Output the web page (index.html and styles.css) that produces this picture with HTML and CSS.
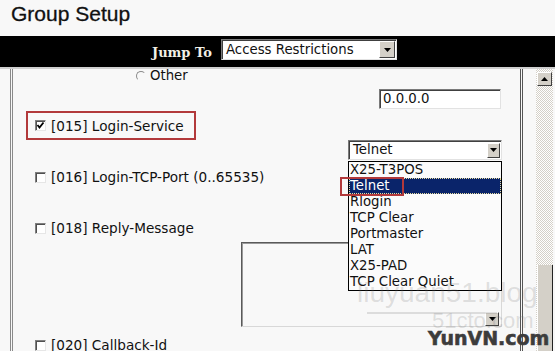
FILE: index.html
```html
<!DOCTYPE html>
<html lang="en">
<head>
    <meta charset="UTF-8">
    <title>Group Setup</title>
    <link rel="stylesheet" href="styles.css">
</head>
<body>
    <div class="title">Group Setup</div>

    <div class="jumpbar">
        <span class="jump-label">Jump To</span>
        <div class="combo combo-jump">
            <span class="combo-value">Access Restrictions</span>
            <span class="combo-btn"><svg width="7" height="4" viewBox="0 0 7 4"><polygon points="0,0 7,0 3.5,4" fill="#000"/></svg></span>
        </div>
    </div>
    <div class="separator"></div>

    <div class="main">
        <div class="frame">
            <div class="row row-other">
                <span class="radio"></span>Other
            </div>

            <div class="row row-ip">
                <div class="field">0.0.0.0</div>
            </div>

            <!-- marked attribute -->
            <div class="row row-marked">
                <label class="attr attr-marked">
                    <span class="check"><svg width="9" height="9" viewBox="0 0 9 9"><polyline points="1.5,4 3.5,6.5 7.5,1.5" fill="none" stroke="#000" stroke-width="1.8"/></svg></span>
                    [015] Login-Service
                </label>
            </div>

            <div class="row row-service">
                <div class="combo combo-service">
                    <span class="combo-value">Telnet</span>
                    <span class="combo-btn"><svg width="7" height="4" viewBox="0 0 7 4"><polygon points="0,0 7,0 3.5,4" fill="#000"/></svg></span>

                    <ul class="listbox">
                        <li>X25-T3POS</li>
                        <li class="selected">Telnet</li>
                        <li>Rlogin</li>
                        <li>TCP Clear</li>
                        <li>Portmaster</li>
                        <li>LAT</li>
                        <li>X25-PAD</li>
                        <li>TCP Clear Quiet</li>
                        <li class="item-mark"></li>
                    </ul>
                </div>
            </div>

            <div class="row row-port">
                <label class="attr"><span class="check"></span>[016] Login-TCP-Port (0..65535)</label>
            </div>

            <div class="row row-reply">
                <label class="attr"><span class="check"></span>[018] Reply-Message</label>
            </div>

            <div class="row row-textarea">
                <div class="textbox">
                    <span class="scroll-btn"><svg width="7" height="4" viewBox="0 0 7 4"><polygon points="0,0 7,0 3.5,4" fill="#000"/></svg></span>
                </div>
            </div>

            <div class="row row-callback">
                <label class="attr"><span class="check"></span>[020] Callback-Id</label>
            </div>
        </div>

        <div class="gutter"></div>

        <div class="scrollbar">
            <span class="sb-up"><svg width="7" height="4" viewBox="0 0 7 4"><polygon points="0,4 7,4 3.5,0" fill="#000"/></svg></span>
            <span class="sb-thumb"></span>
        </div>

        <!-- watermark over the screenshot -->
        <div class="watermark">
            <span class="wm-blog">liuyuan51.blog</span>
            <span class="wm-line"></span>
            <span class="wm-cto">51cto.com</span>
            <span class="wm-site">YunVN.com</span>
        </div>
    </div>
</body>
</html>
```

FILE: styles.css
```css
body {
    margin: 0;
    height: 351px;
    overflow: hidden;
    background: #f8f8f8;
    font-family: "DejaVu Sans", Verdana, sans-serif;
    font-size: 13.3px;
    color: #111;
}
.title {
    height: 36px;
    padding-left: 11px;
    font-family: "Liberation Sans", Arial, sans-serif;
    font-size: 21px;
    line-height: 28px;
    color: #111;
    -webkit-text-stroke: 0.3px #111;
}
.jumpbar {
    height: 31px;
    box-sizing: border-box;
    padding: 3px 0 0 152px;
    background: #000;
    display: flex;
    align-items: flex-start;
}
.jump-label {
    width: 61px;
    margin: 6px 8px 0 0;
    font-family: "DejaVu Serif", "Liberation Serif", serif;
    font-weight: bold;
    font-size: 13px;
    line-height: 16px;
    color: #f2f0e6;
    white-space: nowrap;
}
.separator {
    height: 2px;
    background: #cfcfcf;
}

/* old windows style controls */
.combo {
    box-sizing: border-box;
    display: flex;
    align-items: center;
    justify-content: space-between;
    padding-left: 2px;
    background: #fff;
    border: 1px solid;
    border-color: #7a7a7a #e2e2e2 #e2e2e2 #7a7a7a;
    box-shadow: inset 1px 1px #404040;
}
.combo-jump {
    width: 176px;
    height: 21px;
    line-height: 17px;
}
.combo-service {
    position: relative;
    width: 154px;
    height: 20px;
    line-height: 16px;
}
.combo-value {
    padding-left: 2px;
    white-space: nowrap;
}
.combo-btn, .scroll-btn, .sb-up {
    flex: none;
    box-sizing: border-box;
    display: flex;
    align-items: center;
    justify-content: center;
    background: #d4d0c8;
    border: 1px solid;
    border-color: #fff #404040 #404040 #fff;
}
.combo-jump .combo-btn {
    width: 16px;
    height: 17px;
    margin-right: 1px;
}
.combo-service .combo-btn {
    width: 13px;
    height: 15px;
    margin-right: 1px;
}
.listbox {
    position: absolute;
    top: 20px;
    left: -1px;
    z-index: 2;
    width: 154px;
    box-sizing: border-box;
    margin: 0;
    padding: 0;
    list-style: none;
    background: #fbfbfb;
    border: 1px solid #000;
}
.listbox li {
    height: 16px;
    line-height: 16px;
    padding-left: 1px;
    white-space: nowrap;
}
.listbox .selected {
    background: #0a246a;
    color: #fff;
    outline: 1px dotted #e6dca0;
    outline-offset: -1px;
}
.listbox .item-mark {
    position: absolute;
    top: 15px;
    left: -9px;
    width: 64px;
    height: 19px;
    box-sizing: border-box;
    padding: 0;
    border: 2px solid #b2393b;
}

.main {
    position: relative;
    display: flex;
    height: 282px;
}
.frame {
    flex: none;
    width: 507px;
    margin-left: 10px;
    border-left: 3px double #8a8a8a;
    border-right: 3px double #555;
}
.gutter {
    flex: none;
    width: 13px;
}
.scrollbar {
    flex: none;
    width: 17px;
    display: flex;
    flex-direction: column;
    background: repeating-conic-gradient(#d4d0c8 0 25%, #fff 0 50%) 0 0 / 2px 2px;
}
.sb-up {
    width: 15px;
    height: 14px;
    margin: 3px 0 0 1px;
}
.sb-thumb {
    margin: auto 0 0 1px;
    width: 16px;
    height: 86px;
    box-sizing: border-box;
    background: #d4d0c8;
    border-left: 1px solid #fff;
    border-right: 1px solid #222;
}

.row {
    display: flex;
}
.row-other {
    height: 16px;
    margin-top: -1px;
    padding-left: 123px;
    align-items: center;
    gap: 4px;
    line-height: 16px;
}
.radio {
    width: 10px;
    height: 10px;
    box-sizing: border-box;
    border-radius: 50%;
    border: 1px solid;
    border-color: #8a8a8a transparent transparent #8a8a8a;
}
.row-ip {
    margin-top: 5px;
    padding-left: 366px;
}
.field {
    width: 122px;
    height: 20px;
    box-sizing: border-box;
    padding-left: 3px;
    line-height: 17px;
    background: #fff;
    border: 1px solid;
    border-color: #7a7a7a #e2e2e2 #e2e2e2 #7a7a7a;
    box-shadow: inset 1px 1px #404040;
}
.row-marked {
    margin-top: 2px;
    padding-left: 13px;
}
.row-service {
    padding-left: 335px;
}
.row-port {
    margin-top: 9px;
    padding-left: 22px;
}
.row-reply {
    margin-top: 35px;
    padding-left: 22px;
}
.row-textarea {
    margin-top: 6px;
    padding-left: 228px;
}
.row-callback {
    margin-top: 10px;
    padding-left: 22px;
}
.attr {
    display: flex;
    align-items: center;
    gap: 5px;
    height: 16px;
    line-height: 16px;
    font-size: 13.6px;
    white-space: nowrap;
}
.attr-marked {
    width: 170px;
    height: 29px;
    box-sizing: border-box;
    padding-left: 7px;
    border: 2px solid #b2393b;
}
.check {
    flex: none;
    width: 11px;
    height: 11px;
    box-sizing: border-box;
    display: flex;
    align-items: center;
    justify-content: center;
    background: #fff;
    border: 1px solid;
    border-color: #808080 #e6e6e6 #e6e6e6 #808080;
    box-shadow: inset 1px 1px #505050;
}
.textbox {
    width: 261px;
    height: 85px;
    box-sizing: border-box;
    display: flex;
    align-items: flex-end;
    justify-content: flex-end;
    padding-right: 2px;
    border: 1px solid;
    border-color: #5a5a5a #d8d8d8 #d8d8d8 #5a5a5a;
    box-shadow: inset 1px 1px #9a9a9a;
}
.scroll-btn {
    width: 14px;
    height: 14px;
}

.watermark {
    position: absolute;
    inset: 0;
    z-index: 5;
    pointer-events: none;
}
.wm-blog, .wm-cto, .wm-site, .wm-line {
    position: absolute;
    line-height: 1;
    white-space: nowrap;
}
.wm-blog {
    top: 210px;
    left: 357px;
    font-family: "Liberation Sans", Arial, sans-serif;
    font-size: 28px;
    color: rgba(110, 110, 110, 0.2);
}
.wm-line {
    top: 243px;
    left: 367px;
    width: 130px;
    height: 2px;
    background: rgba(110, 110, 110, 0.2);
}
.wm-cto {
    top: 241px;
    left: 432px;
    font-family: "Liberation Sans", Arial, sans-serif;
    font-size: 22px;
    color: rgba(110, 110, 110, 0.2);
}
.wm-site {
    top: 260px;
    left: 428px;
    font-family: "DejaVu Sans", sans-serif;
    font-weight: bold;
    font-size: 19px;
    color: #3c3c3c;
    -webkit-text-stroke: 0.6px #3c3c3c;
}
```
